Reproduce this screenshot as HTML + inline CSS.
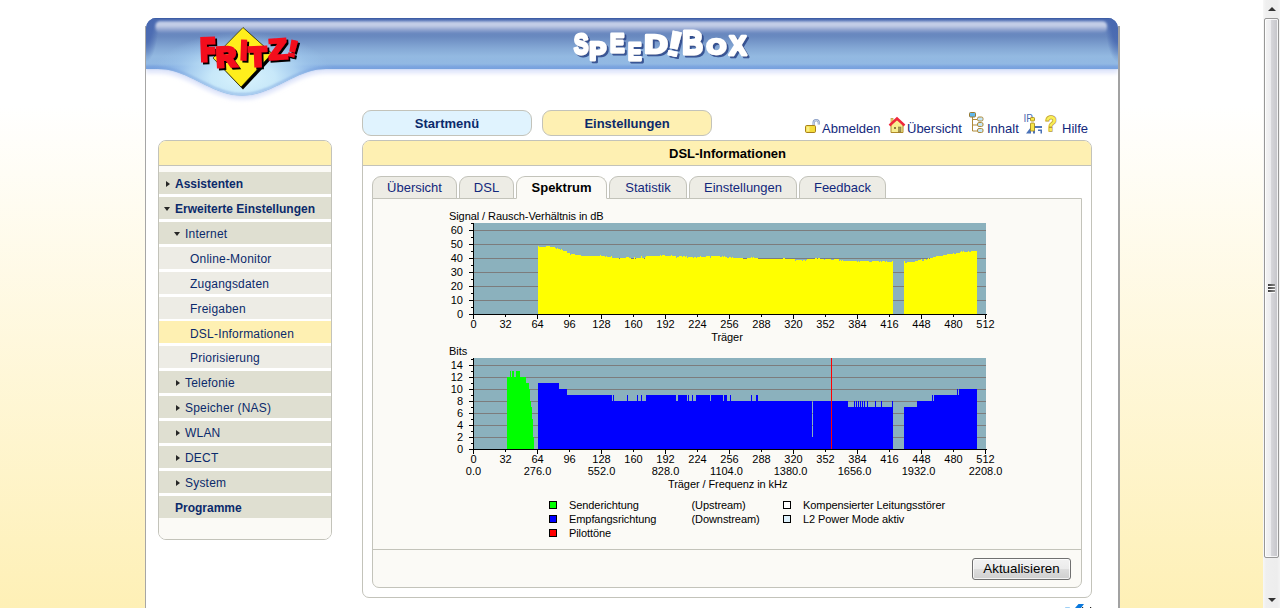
<!DOCTYPE html>
<html lang="de"><head><meta charset="utf-8"><title>FRITZ!Box</title>
<style>
html,body{margin:0;padding:0}
body{width:1280px;height:608px;overflow:hidden;position:relative;font-family:"Liberation Sans", sans-serif;font-size:13px;color:#000;
 background:#fff linear-gradient(to bottom,#ffffff 0,#ffffff 105px,#fef0b6 608px) no-repeat}
*{box-sizing:border-box}
.abs,.hdr,.chart,.ico,.tab,.nb,.tl{position:absolute}
#wrap{position:absolute;left:145px;top:26px;width:975px;height:582px;background:#fff;border-left:1px solid #a6a6a6;border-right:2px solid #a2a2a2}
.hdr{left:145px;top:18px}
.nb{top:110px;width:170px;height:26px;border:1px solid #c3c3ba;border-radius:9px;text-align:center;line-height:25px;font-weight:bold;font-size:13px;color:#0b2a6b}
.tl{top:120px;height:18px;line-height:18px;font-size:13px;color:#12287c;white-space:nowrap}
.menu{position:absolute;left:158px;top:140px;width:174px;height:400px;border:1px solid #c3c3ba;border-radius:8px;background:#fff;overflow:hidden}
.mhead{position:absolute;left:0;top:0;width:100%;height:25px;background:#fef0b2;border-bottom:1px solid #c3c3ba}
.menu:after{content:"";position:absolute;left:0;right:0;top:377px;bottom:0;background:#fbfaf6}
.menu:before{content:"";position:absolute;left:0;right:0;top:25px;height:6px;background:#fbfaf6}
.mi{position:absolute;left:0;width:172px;font-size:12px;color:#0b2a6b;white-space:nowrap}
.mi.l1{background:#dfdfd1;font-weight:bold;padding-left:16px}
.mi.l2{background:#dfdfd1;padding-left:26px;letter-spacing:0.2px}
.mi.l3{background:#edece5;padding-left:31px;letter-spacing:0.2px}
.mi.sel{background:#fef0b2}
.mi.sel span{top:1.5px}
.mi span{position:relative;top:0.5px}
.ar,.ad{position:absolute;width:0;height:0;border-style:solid}
.ar{border-width:3.8px 0 3.8px 4.2px;border-color:transparent transparent transparent #262626;top:9.2px}
.ad{border-width:4.2px 3.8px 0 3.8px;border-color:#262626 transparent transparent transparent;top:9.6px}
.l1 .ar{left:7.3px}.l1 .ad{left:5px}
.l2 .ar{left:16.8px}.l2 .ad{left:15px}
#box{position:absolute;left:362px;top:140px;width:730px;height:458px;border:1px solid #c3c3ba;border-radius:8px 8px 7px 7px;background:#fff;overflow:hidden}
#box .bh{position:absolute;left:0;top:0;width:100%;height:25px;background:#fef0b2;border-bottom:1px solid #c3c3ba;text-align:center;line-height:26px;font-weight:bold;font-size:13px;color:#000;padding-left:1px}
#panel{position:absolute;left:372px;top:198px;width:710px;height:390px;border:1px solid #c3c3ba;border-radius:0 0 7px 7px;background:#fbfaf6}
#hr{position:absolute;left:373px;top:549px;width:708px;height:1px;background:#c3c3ba}
.tab{top:176px;height:23px;border:1px solid #c3c3ba;border-bottom:1px solid #c3c3ba;border-radius:9px 9px 0 0;background:#edece5;text-align:center;line-height:21px;font-size:13px;color:#12287c;margin-right:0}
.tab.act{background:#fbfaf6;border-bottom-color:#fbfaf6;font-weight:bold;color:#000}
#btn{position:absolute;left:972px;top:558px;width:99px;height:22px;border:1px solid #707070;border-radius:3px;background:linear-gradient(to bottom,#f2f2f2 0,#ebebeb 50%,#dddddd 51%,#cfcfcf 100%);box-shadow:inset 0 0 0 1px rgba(255,255,255,.75);text-align:center;line-height:20px;font-size:13.333px;color:#000}
#sb{position:absolute;left:1263px;top:0;width:17px;height:608px;background:linear-gradient(to right,#f7f7f7 0,#efefef 3px,#ededed 14px,#f3f3f3 17px)}
#sbt{position:absolute;left:1px;top:18px;width:15px;height:540px;border:1px solid #979797;border-radius:2px;background:linear-gradient(to right,#f4f4f4 0,#ebebee 45%,#d6d6da 50%,#c4c4c9 100%);box-shadow:inset 0 0 0 1px rgba(255,255,255,.8)}
.grip{position:absolute;left:3px;width:7px;height:1.5px;background:linear-gradient(to right,#3c3c3c,#8a8a8a);box-shadow:0 1px 0 rgba(255,255,255,.9)}
.ls{letter-spacing:-0.08px}
.arw{position:absolute;left:5px;width:0;height:0;border-style:solid}
</style></head><body>
<div id="wrap"></div>
<svg class="hdr" width="975" height="90" viewBox="145 18 975 90">
<defs>
<linearGradient id="band" x1="0" y1="18" x2="0" y2="69" gradientUnits="userSpaceOnUse">
<stop offset="0" stop-color="#3f5fa6"/><stop offset="0.04" stop-color="#4b6bb1"/>
<stop offset="0.10" stop-color="#5675b7"/><stop offset="0.25" stop-color="#6483bd"/>
<stop offset="0.37" stop-color="#6a8ac0"/><stop offset="0.60" stop-color="#85a9d6"/>
<stop offset="0.75" stop-color="#93b9e1"/><stop offset="0.90" stop-color="#91b8e3"/>
<stop offset="0.95" stop-color="#80a9e0"/><stop offset="1" stop-color="#78a2de"/></linearGradient>
<linearGradient id="hl" x1="0" y1="20.5" x2="0" y2="33.5" gradientUnits="userSpaceOnUse">
<stop offset="0" stop-color="#c8d2ea" stop-opacity="0.55"/><stop offset="0.22" stop-color="#c8d2ea" stop-opacity="1"/>
<stop offset="0.45" stop-color="#c3cde6" stop-opacity="0.95"/><stop offset="0.75" stop-color="#b4c0df" stop-opacity="0.5"/><stop offset="1" stop-color="#b0bcdc" stop-opacity="0"/></linearGradient>
<radialGradient id="glow" cx="243" cy="78" r="92" gradientUnits="userSpaceOnUse" gradientTransform="translate(0 78) scale(1 0.5) translate(0 -78)">
<stop offset="0" stop-color="#d8f3fd" stop-opacity="1"/><stop offset="0.35" stop-color="#caeafa" stop-opacity="0.97"/><stop offset="0.6" stop-color="#b4d9f4" stop-opacity="0.8"/><stop offset="0.82" stop-color="#a0c8ee" stop-opacity="0.4"/><stop offset="1" stop-color="#9cc4ea" stop-opacity="0"/></radialGradient>
<radialGradient id="cornL" cx="146" cy="18" r="1" gradientUnits="userSpaceOnUse" gradientTransform="translate(146 18) scale(13 44) translate(-146 -18)">
<stop offset="0" stop-color="#4868b0" stop-opacity="1"/><stop offset="0.55" stop-color="#4868b0" stop-opacity="0.85"/><stop offset="1" stop-color="#4868b0" stop-opacity="0"/></radialGradient>
<radialGradient id="cornR" cx="1118" cy="18" r="1" gradientUnits="userSpaceOnUse" gradientTransform="translate(1118 18) scale(13 44) translate(-1118 -18)">
<stop offset="0" stop-color="#4868b0" stop-opacity="1"/><stop offset="0.55" stop-color="#4868b0" stop-opacity="0.85"/><stop offset="1" stop-color="#4868b0" stop-opacity="0"/></radialGradient>
<clipPath id="hclip"><path d="M146,108 V28 a10,10 0 0 1 10,-10 H1108 a10,10 0 0 1 10,10 V108 Z"/></clipPath>
<filter id="shF" x="-10%" y="-10%" width="125%" height="130%"><feOffset in="SourceAlpha" dx="2.2" dy="2.2" result="o"/><feFlood flood-color="#000"/><feComposite in2="o" operator="in" result="s"/><feMerge><feMergeNode in="s"/><feMergeNode in="SourceGraphic"/></feMerge></filter>
<filter id="shS" x="-5%" y="-10%" width="112%" height="125%"><feOffset in="SourceAlpha" dx="1.5" dy="1.5" result="o"/><feFlood flood-color="#2a4488" flood-opacity="0.85"/><feComposite in2="o" operator="in" result="s"/><feMerge><feMergeNode in="s"/><feMergeNode in="SourceGraphic"/></feMerge></filter>
<filter id="blur1" x="-5%" y="-50%" width="110%" height="200%"><feGaussianBlur stdDeviation="1.2"/></filter>
<filter id="blur2" x="-10%" y="-30%" width="120%" height="160%"><feGaussianBlur stdDeviation="2.2"/></filter>
<filter id="blurh" x="-2%" y="-40%" width="104%" height="180%"><feGaussianBlur stdDeviation="0.9"/></filter>
</defs>
<g clip-path="url(#hclip)">
<path d="M146,69 L158,69.0 L162,69.15 L166,69.59 L170,70.31 L174,71.3 L178,72.54 L182,73.99 L186,75.62 L190,77.41 L194,79.3 L198,81.26 L202,83.24 L206,85.2 L210,87.09 L214,88.88 L218,90.51 L222,91.96 L226,93.2 L230,94.19 L234,94.91 L238,95.35 L242,95.5 L246,95.35 L250,94.91 L254,94.19 L258,93.2 L262,91.96 L266,90.51 L270,88.88 L274,87.09 L278,85.2 L282,83.24 L286,81.26 L290,79.3 L294,77.41 L298,75.62 L302,73.99 L306,72.54 L310,71.3 L314,70.31 L318,69.59 L322,69.15 L326,69.0 L326,69 H1118" fill="none" stroke="#dbe2fa" stroke-width="5" filter="url(#blur2)" transform="translate(0 1.5)"/>
<path d="M146,18 H1118 V69 H326 L326,69.0 L322,69.15 L318,69.59 L314,70.31 L310,71.3 L306,72.54 L302,73.99 L298,75.62 L294,77.41 L290,79.3 L286,81.26 L282,83.24 L278,85.2 L274,87.09 L270,88.88 L266,90.51 L262,91.96 L258,93.2 L254,94.19 L250,94.91 L246,95.35 L242,95.5 L238,95.35 L234,94.91 L230,94.19 L226,93.2 L222,91.96 L218,90.51 L214,88.88 L210,87.09 L206,85.2 L202,83.24 L198,81.26 L194,79.3 L190,77.41 L186,75.62 L182,73.99 L178,72.54 L174,71.3 L170,70.31 L166,69.59 L162,69.15 L158,69.0 L146,69 Z" fill="url(#band)"/>
<path d="M146,18 H1118 V69 H326 L326,69.0 L322,69.15 L318,69.59 L314,70.31 L310,71.3 L306,72.54 L302,73.99 L298,75.62 L294,77.41 L290,79.3 L286,81.26 L282,83.24 L278,85.2 L274,87.09 L270,88.88 L266,90.51 L262,91.96 L258,93.2 L254,94.19 L250,94.91 L246,95.35 L242,95.5 L238,95.35 L234,94.91 L230,94.19 L226,93.2 L222,91.96 L218,90.51 L214,88.88 L210,87.09 L206,85.2 L202,83.24 L198,81.26 L194,79.3 L190,77.41 L186,75.62 L182,73.99 L178,72.54 L174,71.3 L170,70.31 L166,69.59 L162,69.15 L158,69.0 L146,69 Z" fill="url(#glow)"/>
<path d="M146,69 L158,69.0 L162,69.15 L166,69.59 L170,70.31 L174,71.3 L178,72.54 L182,73.99 L186,75.62 L190,77.41 L194,79.3 L198,81.26 L202,83.24 L206,85.2 L210,87.09 L214,88.88 L218,90.51 L222,91.96 L226,93.2 L230,94.19 L234,94.91 L238,95.35 L242,95.5 L246,95.35 L250,94.91 L254,94.19 L258,93.2 L262,91.96 L266,90.51 L270,88.88 L274,87.09 L278,85.2 L282,83.24 L286,81.26 L290,79.3 L294,77.41 L298,75.62 L302,73.99 L306,72.54 L310,71.3 L314,70.31 L318,69.59 L322,69.15 L326,69.0 L326,69 H1118" fill="none" stroke="#759ddd" stroke-width="2" opacity="0.6" filter="url(#blur1)" transform="translate(0 -1.2)"/>
<rect x="146" y="18" width="14" height="46" fill="url(#cornL)"/>
<rect x="1104" y="18" width="14" height="46" fill="url(#cornR)"/>
<rect x="155.5" y="21" width="951.500" height="12" rx="5" fill="url(#hl)" filter="url(#blurh)"/>
<rect x="146" y="18" width="972" height="1" fill="#3d5da4" opacity="0.9"/>
</g>
<g>
<polygon points="245,29.5 274.5,55.5 243,89.5 215,60" fill="#000"/>
<polygon points="243,27.5 272,53.5 241,87 213,58" fill="#ffee1c" stroke="#1a1a00" stroke-width="0.7"/>
<g filter="url(#shF)" aria-label="FRITZ!">
<text transform="translate(208.00 49.60) rotate(-2) scale(0.2314 0.3101) translate(-32.00 34.50)" font-family='"Liberation Sans", sans-serif' font-weight="bold" font-size="100px" fill="#f40a1e" stroke="#f40a1e" stroke-width="13.44" stroke-linejoin="miter" opacity="1">F</text>
<text transform="translate(226.75 56.85) rotate(-3) scale(0.2756 0.2739) translate(-38.25 34.50)" font-family='"Liberation Sans", sans-serif' font-weight="bold" font-size="100px" fill="#f40a1e" stroke="#f40a1e" stroke-width="12.37" stroke-linejoin="miter" opacity="1">R</text>
<text transform="translate(243.70 50.25) rotate(2) scale(0.2483 0.2681) translate(-13.75 34.50)" font-family='"Liberation Sans", sans-serif' font-weight="bold" font-size="100px" fill="#f40a1e" stroke="#f40a1e" stroke-width="10.08" stroke-linejoin="miter" opacity="1">I</text>
<text transform="translate(257.75 56.55) rotate(-2) scale(0.2729 0.2623) translate(-30.50 34.50)" font-family='"Liberation Sans", sans-serif' font-weight="bold" font-size="100px" fill="#f40a1e" stroke="#f40a1e" stroke-width="13.46" stroke-linejoin="miter" opacity="1">T</text>
<text transform="translate(277.60 48.95) rotate(-4) scale(0.3091 0.2855) translate(-30.50 34.50)" font-family='"Liberation Sans", sans-serif' font-weight="bold" font-size="100px" fill="#f40a1e" stroke="#f40a1e" stroke-width="8.75" stroke-linejoin="miter" opacity="1">Z</text>
<text transform="translate(292.90 48.60) rotate(13) scale(0.3724 0.2348) translate(-16.75 34.50)" font-family='"Liberation Sans", sans-serif' font-weight="bold" font-size="100px" fill="#f40a1e" stroke="#f40a1e" stroke-width="4.06" stroke-linejoin="miter" opacity="1">!</text>
</g>
</g>
<g filter="url(#shS)" aria-label="Speed!Box">
<text transform="translate(581.15 43.45) rotate(0) scale(0.2217 0.2972) translate(-33.00 34.50)" font-family='"Liberation Sans", sans-serif' font-weight="bold" font-size="100px" fill="#ffffff" stroke="#ffffff" stroke-width="9.35" stroke-linejoin="round" opacity="1">S</text>
<text transform="translate(598.30 51.20) rotate(0) scale(0.2561 0.2580) translate(-35.00 34.50)" font-family='"Liberation Sans", sans-serif' font-weight="bold" font-size="100px" fill="#ffffff" stroke="#ffffff" stroke-width="10.11" stroke-linejoin="round" opacity="1">P</text>
<text transform="translate(617.40 43.45) rotate(0) scale(0.2159 0.2565) translate(-34.75 34.50)" font-family='"Liberation Sans", sans-serif' font-weight="bold" font-size="100px" fill="#ffffff" stroke="#ffffff" stroke-width="11.05" stroke-linejoin="round" opacity="1">E</text>
<text transform="translate(635.00 51.45) rotate(0) scale(0.2018 0.2391) translate(-34.75 34.50)" font-family='"Liberation Sans", sans-serif' font-weight="bold" font-size="100px" fill="#ffffff" stroke="#ffffff" stroke-width="11.84" stroke-linejoin="round" opacity="1">E</text>
<text transform="translate(656.40 43.85) rotate(0) scale(0.3252 0.2652) translate(-37.25 34.50)" font-family='"Liberation Sans", sans-serif' font-weight="bold" font-size="100px" fill="#ffffff" stroke="#ffffff" stroke-width="9.53" stroke-linejoin="round" opacity="1">D</text>
<text transform="translate(674.80 43.85) rotate(12) scale(0.5931 0.3580) translate(-16.75 34.50)" font-family='"Liberation Sans", sans-serif' font-weight="bold" font-size="100px" fill="#ffffff" stroke="#ffffff" stroke-width="2.17" stroke-linejoin="round" opacity="1">!</text>
<text transform="translate(692.85 42.30) rotate(0) scale(0.2869 0.3333) translate(-37.00 34.50)" font-family='"Liberation Sans", sans-serif' font-weight="bold" font-size="100px" fill="#ffffff" stroke="#ffffff" stroke-width="9.05" stroke-linejoin="round" opacity="1">B</text>
<text transform="translate(716.20 46.20) rotate(0) scale(0.2532 0.2141) translate(-38.75 34.50)" font-family='"Liberation Sans", sans-serif' font-weight="bold" font-size="100px" fill="#ffffff" stroke="#ffffff" stroke-width="12.03" stroke-linejoin="round" opacity="1">O</text>
<text transform="translate(737.75 45.75) rotate(0) scale(0.2620 0.2797) translate(-33.25 34.50)" font-family='"Liberation Sans", sans-serif' font-weight="bold" font-size="100px" fill="#ffffff" stroke="#ffffff" stroke-width="9.60" stroke-linejoin="round" opacity="1">X</text>
</g>
</svg>
<div class="nb" style="left:362px;background:#e0f3fe">Startmenü</div>
<div class="nb" style="left:542px;background:#fef0b2">Einstellungen</div>
<svg class="ico" style="left:804px;top:117px" width="18" height="18" viewBox="804 117 18 18">
<path d="M813.6,126 V122.8 a2.600,2.600 0 0 1 5.200,0 V124.600" fill="none" stroke="#8499c2" stroke-width="2.200"/>
<path d="M813.6,126 V122.8 a2.600,2.600 0 0 1 5.200,0 V124.600" fill="none" stroke="#e4ebf7" stroke-width="0.7"/>
<rect x="805.5" y="125.5" width="10" height="7" rx="1.2" fill="#f4dc3c" stroke="#a8801c" stroke-width="1"/>
<rect x="806.5" y="126.5" width="3" height="5" fill="#fdf39a" opacity="0.8"/>
</svg>
<svg class="ico" style="left:887px;top:115px" width="20" height="20" viewBox="887 115 20 20">
<rect x="891" y="118.5" width="2" height="5" fill="#f2de70" stroke="#b08a28" stroke-width="0.6"/>
<path d="M891,124.5 L897,119.5 L903,124.5 V132.5 H891 Z" fill="#f8ee90" stroke="#b08a28" stroke-width="1"/>
<path d="M889.5,125.5 L897,118.5 L904.5,125.5" fill="none" stroke="#f0283c" stroke-width="2.4" stroke-linejoin="miter"/>
<rect x="894" y="127" width="2" height="2" fill="#8a7a40"/>
<rect x="898.5" y="127" width="2.5" height="5" fill="#a89858" stroke="#7a6a30" stroke-width="0.5"/>
</svg>
<svg class="ico" style="left:967px;top:111px" width="20" height="24" viewBox="967 111 20 24">
<path d="M972.5,117 V131 H977 M972.5,119.5 H977 M972.5,125 H977" fill="none" stroke="#b08a38" stroke-width="1"/>
<rect x="969.5" y="112.500" width="6" height="4.500" rx="1" fill="#62b8ec" stroke="#9a7a30" stroke-width="1"/>
<rect x="977.5" y="117" width="5.500" height="4" rx="1.500" fill="#c4e6f8" stroke="#b08a38" stroke-width="1"/>
<rect x="977.5" y="122.500" width="5.500" height="4" rx="1.500" fill="#c4e6f8" stroke="#b08a38" stroke-width="1"/>
<rect x="977.5" y="128.500" width="5.500" height="4" rx="1.500" fill="#c4e6f8" stroke="#b08a38" stroke-width="1"/>
</svg>
<svg class="ico" style="left:1022px;top:112px" width="22" height="24" viewBox="1022 112 22 24">
<text x="1023.5" y="122" font-family='"Liberation Sans", sans-serif' font-size="10px" fill="#4a6cb0">IP</text>
<path d="M1026,133.500 L1031,127 V133.500 Z M1033,133.500 V126 H1042 V128 H1035 V133.500 Z M1038,129.500 H1042 V133.500 H1040.500 V131 H1038 Z" fill="#4a72b8"/>
<rect x="1030.500" y="117.500" width="4" height="3.500" rx="0.8" fill="#f6e648" stroke="#a88a20" stroke-width="0.9"/>
<rect x="1030.500" y="123" width="4" height="8" rx="0.8" fill="#f6e648" stroke="#a88a20" stroke-width="0.9"/>
</svg>
<svg class="ico" style="left:1043px;top:112px" width="18" height="24" viewBox="1043 112 18 24">
<text x="1045.2" y="131.300" font-family='"Liberation Sans", sans-serif' font-weight="bold" font-size="22.500px" fill="#f9ee58" stroke="#b89830" stroke-width="1.6" paint-order="stroke fill" textLength="11.500" lengthAdjust="spacingAndGlyphs">?</text>
</svg>
<div class="tl" style="left:822px">Abmelden</div>
<div class="tl" style="left:907px">Übersicht</div>
<div class="tl" style="left:987px">Inhalt</div>
<div class="tl" style="left:1062px">Hilfe</div>
<div class="menu"><div class="mhead"></div>
<div class="mi l1" style="top:31px;height:22px;line-height:22px"><i class="ar"></i><span>Assistenten</span></div>
<div class="mi l1" style="top:56px;height:22px;line-height:22px"><i class="ad"></i><span>Erweiterte Einstellungen</span></div>
<div class="mi l2" style="top:81px;height:22px;line-height:22px"><i class="ad"></i><span>Internet</span></div>
<div class="mi l3" style="top:106px;height:22px;line-height:22px"><span>Online-Monitor</span></div>
<div class="mi l3" style="top:131px;height:22px;line-height:22px"><span>Zugangsdaten</span></div>
<div class="mi l3" style="top:156px;height:22px;line-height:22px"><span>Freigaben</span></div>
<div class="mi l3 sel" style="top:180px;height:22px;line-height:22px"><span>DSL-Informationen</span></div>
<div class="mi l3" style="top:205px;height:22px;line-height:22px"><span>Priorisierung</span></div>
<div class="mi l2" style="top:230px;height:22px;line-height:22px"><i class="ar"></i><span>Telefonie</span></div>
<div class="mi l2" style="top:255px;height:22px;line-height:22px"><i class="ar"></i><span>Speicher (NAS)</span></div>
<div class="mi l2" style="top:280px;height:22px;line-height:22px"><i class="ar"></i><span>WLAN</span></div>
<div class="mi l2" style="top:305px;height:22px;line-height:22px"><i class="ar"></i><span>DECT</span></div>
<div class="mi l2" style="top:330px;height:22px;line-height:22px"><i class="ar"></i><span>System</span></div>
<div class="mi l1" style="top:355px;height:22px;line-height:22px"><span>Programme</span></div>
</div>
<div id="box"><div class="bh">DSL-Informationen</div></div>
<div id="panel"></div>
<div class="tab" style="left:372px;width:85px">Übersicht</div>
<div class="tab" style="left:459px;width:55px">DSL</div>
<div class="tab act" style="left:516px;width:91px">Spektrum</div>
<div class="tab" style="left:609px;width:78px">Statistik</div>
<div class="tab" style="left:689px;width:108px">Einstellungen</div>
<div class="tab" style="left:799px;width:87px">Feedback</div>
<div id="hr"></div>
<svg class="chart" width="580" height="340" viewBox="440 205 580 340" style="left:440px;top:205px" font-family='"Liberation Sans", sans-serif' font-size="11px" fill="#000">
<g shape-rendering="crispEdges">
<rect x="474" y="223" width="512" height="91" fill="#8bb1bd"/>
<rect x="474" y="300" width="512" height="1" fill="#7c7c7c"/>
<rect x="474" y="286" width="512" height="1" fill="#7c7c7c"/>
<rect x="474" y="272" width="512" height="1" fill="#7c7c7c"/>
<rect x="474" y="258" width="512" height="1" fill="#7c7c7c"/>
<rect x="474" y="244" width="512" height="1" fill="#7c7c7c"/>
<rect x="474" y="230" width="512" height="1" fill="#7c7c7c"/>
<rect x="538" y="246" width="1" height="68" fill="#ffff00"/>
<rect x="539" y="247" width="7" height="67" fill="#ffff00"/>
<rect x="546" y="246" width="4" height="68" fill="#ffff00"/>
<rect x="550" y="247" width="5" height="67" fill="#ffff00"/>
<rect x="555" y="248" width="1" height="66" fill="#ffff00"/>
<rect x="556" y="249" width="1" height="65" fill="#ffff00"/>
<rect x="557" y="248" width="1" height="66" fill="#ffff00"/>
<rect x="558" y="249" width="2" height="65" fill="#ffff00"/>
<rect x="560" y="250" width="1" height="64" fill="#ffff00"/>
<rect x="561" y="249" width="1" height="65" fill="#ffff00"/>
<rect x="562" y="250" width="1" height="64" fill="#ffff00"/>
<rect x="563" y="251" width="4" height="63" fill="#ffff00"/>
<rect x="567" y="253" width="3" height="61" fill="#ffff00"/>
<rect x="570" y="255" width="1" height="59" fill="#ffff00"/>
<rect x="571" y="254" width="4" height="60" fill="#ffff00"/>
<rect x="575" y="255" width="6" height="59" fill="#ffff00"/>
<rect x="581" y="256" width="19" height="58" fill="#ffff00"/>
<rect x="600" y="255" width="1" height="59" fill="#ffff00"/>
<rect x="601" y="256" width="4" height="58" fill="#ffff00"/>
<rect x="605" y="257" width="1" height="57" fill="#ffff00"/>
<rect x="606" y="256" width="1" height="58" fill="#ffff00"/>
<rect x="607" y="257" width="4" height="57" fill="#ffff00"/>
<rect x="611" y="256" width="1" height="58" fill="#ffff00"/>
<rect x="612" y="258" width="7" height="56" fill="#ffff00"/>
<rect x="619" y="259" width="1" height="55" fill="#ffff00"/>
<rect x="620" y="258" width="6" height="56" fill="#ffff00"/>
<rect x="626" y="257" width="3" height="57" fill="#ffff00"/>
<rect x="629" y="258" width="2" height="56" fill="#ffff00"/>
<rect x="631" y="259" width="3" height="55" fill="#ffff00"/>
<rect x="634" y="257" width="1" height="57" fill="#ffff00"/>
<rect x="635" y="259" width="1" height="55" fill="#ffff00"/>
<rect x="636" y="258" width="5" height="56" fill="#ffff00"/>
<rect x="641" y="256" width="1" height="58" fill="#ffff00"/>
<rect x="642" y="258" width="2" height="56" fill="#ffff00"/>
<rect x="644" y="259" width="1" height="55" fill="#ffff00"/>
<rect x="645" y="257" width="1" height="57" fill="#ffff00"/>
<rect x="646" y="256" width="14" height="58" fill="#ffff00"/>
<rect x="660" y="255" width="1" height="59" fill="#ffff00"/>
<rect x="661" y="256" width="1" height="58" fill="#ffff00"/>
<rect x="662" y="255" width="3" height="59" fill="#ffff00"/>
<rect x="665" y="256" width="6" height="58" fill="#ffff00"/>
<rect x="671" y="255" width="1" height="59" fill="#ffff00"/>
<rect x="672" y="256" width="4" height="58" fill="#ffff00"/>
<rect x="676" y="258" width="1" height="56" fill="#ffff00"/>
<rect x="677" y="257" width="2" height="57" fill="#ffff00"/>
<rect x="679" y="256" width="3" height="58" fill="#ffff00"/>
<rect x="682" y="257" width="1" height="57" fill="#ffff00"/>
<rect x="683" y="256" width="2" height="58" fill="#ffff00"/>
<rect x="685" y="257" width="1" height="57" fill="#ffff00"/>
<rect x="686" y="256" width="1" height="58" fill="#ffff00"/>
<rect x="687" y="258" width="1" height="56" fill="#ffff00"/>
<rect x="688" y="257" width="5" height="57" fill="#ffff00"/>
<rect x="693" y="258" width="1" height="56" fill="#ffff00"/>
<rect x="694" y="257" width="2" height="57" fill="#ffff00"/>
<rect x="696" y="258" width="1" height="56" fill="#ffff00"/>
<rect x="697" y="257" width="3" height="57" fill="#ffff00"/>
<rect x="700" y="256" width="1" height="58" fill="#ffff00"/>
<rect x="701" y="257" width="5" height="57" fill="#ffff00"/>
<rect x="706" y="256" width="4" height="58" fill="#ffff00"/>
<rect x="710" y="258" width="1" height="56" fill="#ffff00"/>
<rect x="711" y="256" width="9" height="58" fill="#ffff00"/>
<rect x="720" y="257" width="2" height="57" fill="#ffff00"/>
<rect x="722" y="256" width="1" height="58" fill="#ffff00"/>
<rect x="723" y="257" width="1" height="57" fill="#ffff00"/>
<rect x="724" y="256" width="1" height="58" fill="#ffff00"/>
<rect x="725" y="257" width="2" height="57" fill="#ffff00"/>
<rect x="727" y="258" width="2" height="56" fill="#ffff00"/>
<rect x="729" y="257" width="2" height="57" fill="#ffff00"/>
<rect x="731" y="258" width="1" height="56" fill="#ffff00"/>
<rect x="732" y="257" width="1" height="57" fill="#ffff00"/>
<rect x="733" y="258" width="10" height="56" fill="#ffff00"/>
<rect x="743" y="259" width="4" height="55" fill="#ffff00"/>
<rect x="747" y="258" width="4" height="56" fill="#ffff00"/>
<rect x="751" y="257" width="1" height="57" fill="#ffff00"/>
<rect x="752" y="258" width="1" height="56" fill="#ffff00"/>
<rect x="753" y="257" width="1" height="57" fill="#ffff00"/>
<rect x="754" y="258" width="4" height="56" fill="#ffff00"/>
<rect x="758" y="259" width="25" height="55" fill="#ffff00"/>
<rect x="783" y="258" width="2" height="56" fill="#ffff00"/>
<rect x="785" y="259" width="10" height="55" fill="#ffff00"/>
<rect x="795" y="261" width="1" height="53" fill="#ffff00"/>
<rect x="796" y="260" width="6" height="54" fill="#ffff00"/>
<rect x="802" y="261" width="1" height="53" fill="#ffff00"/>
<rect x="803" y="260" width="2" height="54" fill="#ffff00"/>
<rect x="805" y="261" width="1" height="53" fill="#ffff00"/>
<rect x="806" y="260" width="1" height="54" fill="#ffff00"/>
<rect x="807" y="259" width="8" height="55" fill="#ffff00"/>
<rect x="815" y="258" width="2" height="56" fill="#ffff00"/>
<rect x="817" y="259" width="1" height="55" fill="#ffff00"/>
<rect x="818" y="258" width="2" height="56" fill="#ffff00"/>
<rect x="820" y="259" width="4" height="55" fill="#ffff00"/>
<rect x="824" y="260" width="1" height="54" fill="#ffff00"/>
<rect x="825" y="259" width="6" height="55" fill="#ffff00"/>
<rect x="831" y="260" width="3" height="54" fill="#ffff00"/>
<rect x="834" y="259" width="5" height="55" fill="#ffff00"/>
<rect x="839" y="261" width="1" height="53" fill="#ffff00"/>
<rect x="840" y="260" width="1" height="54" fill="#ffff00"/>
<rect x="841" y="261" width="1" height="53" fill="#ffff00"/>
<rect x="842" y="260" width="1" height="54" fill="#ffff00"/>
<rect x="843" y="261" width="14" height="53" fill="#ffff00"/>
<rect x="857" y="262" width="1" height="52" fill="#ffff00"/>
<rect x="858" y="261" width="1" height="53" fill="#ffff00"/>
<rect x="859" y="262" width="1" height="52" fill="#ffff00"/>
<rect x="860" y="261" width="9" height="53" fill="#ffff00"/>
<rect x="869" y="262" width="3" height="52" fill="#ffff00"/>
<rect x="872" y="261" width="7" height="53" fill="#ffff00"/>
<rect x="879" y="262" width="1" height="52" fill="#ffff00"/>
<rect x="880" y="261" width="1" height="53" fill="#ffff00"/>
<rect x="881" y="262" width="1" height="52" fill="#ffff00"/>
<rect x="882" y="261" width="3" height="53" fill="#ffff00"/>
<rect x="885" y="262" width="1" height="52" fill="#ffff00"/>
<rect x="886" y="261" width="1" height="53" fill="#ffff00"/>
<rect x="887" y="262" width="5" height="52" fill="#ffff00"/>
<rect x="892" y="261" width="1" height="53" fill="#ffff00"/>
<rect x="904" y="261" width="1" height="53" fill="#ffff00"/>
<rect x="905" y="263" width="2" height="51" fill="#ffff00"/>
<rect x="907" y="262" width="8" height="52" fill="#ffff00"/>
<rect x="915" y="261" width="3" height="53" fill="#ffff00"/>
<rect x="918" y="260" width="3" height="54" fill="#ffff00"/>
<rect x="921" y="259" width="1" height="55" fill="#ffff00"/>
<rect x="922" y="261" width="2" height="53" fill="#ffff00"/>
<rect x="924" y="259" width="2" height="55" fill="#ffff00"/>
<rect x="926" y="260" width="1" height="54" fill="#ffff00"/>
<rect x="927" y="259" width="1" height="55" fill="#ffff00"/>
<rect x="928" y="258" width="1" height="56" fill="#ffff00"/>
<rect x="929" y="259" width="1" height="55" fill="#ffff00"/>
<rect x="930" y="258" width="3" height="56" fill="#ffff00"/>
<rect x="933" y="257" width="3" height="57" fill="#ffff00"/>
<rect x="936" y="256" width="7" height="58" fill="#ffff00"/>
<rect x="943" y="255" width="4" height="59" fill="#ffff00"/>
<rect x="947" y="254" width="6" height="60" fill="#ffff00"/>
<rect x="953" y="253" width="1" height="61" fill="#ffff00"/>
<rect x="954" y="254" width="2" height="60" fill="#ffff00"/>
<rect x="956" y="253" width="4" height="61" fill="#ffff00"/>
<rect x="960" y="252" width="1" height="62" fill="#ffff00"/>
<rect x="961" y="251" width="1" height="63" fill="#ffff00"/>
<rect x="962" y="252" width="1" height="62" fill="#ffff00"/>
<rect x="963" y="251" width="1" height="63" fill="#ffff00"/>
<rect x="964" y="252" width="4" height="62" fill="#ffff00"/>
<rect x="968" y="251" width="1" height="63" fill="#ffff00"/>
<rect x="969" y="252" width="2" height="62" fill="#ffff00"/>
<rect x="971" y="251" width="6" height="63" fill="#ffff00"/>
<rect x="473" y="223" width="1" height="92" fill="#000"/>
<rect x="473" y="314" width="514" height="1" fill="#000"/>
<rect x="469" y="314" width="4" height="1" fill="#000"/>
<rect x="471" y="307" width="2" height="1" fill="#000"/>
<rect x="469" y="300" width="4" height="1" fill="#000"/>
<rect x="471" y="293" width="2" height="1" fill="#000"/>
<rect x="469" y="286" width="4" height="1" fill="#000"/>
<rect x="471" y="279" width="2" height="1" fill="#000"/>
<rect x="469" y="272" width="4" height="1" fill="#000"/>
<rect x="471" y="265" width="2" height="1" fill="#000"/>
<rect x="469" y="258" width="4" height="1" fill="#000"/>
<rect x="471" y="251" width="2" height="1" fill="#000"/>
<rect x="469" y="244" width="4" height="1" fill="#000"/>
<rect x="471" y="237" width="2" height="1" fill="#000"/>
<rect x="469" y="230" width="4" height="1" fill="#000"/>
<rect x="471" y="223" width="2" height="1" fill="#000"/>
<rect x="473" y="315" width="1" height="4" fill="#000"/>
<rect x="505" y="315" width="1" height="2" fill="#000"/>
<rect x="537" y="315" width="1" height="4" fill="#000"/>
<rect x="569" y="315" width="1" height="2" fill="#000"/>
<rect x="601" y="315" width="1" height="4" fill="#000"/>
<rect x="633" y="315" width="1" height="2" fill="#000"/>
<rect x="665" y="315" width="1" height="4" fill="#000"/>
<rect x="697" y="315" width="1" height="2" fill="#000"/>
<rect x="729" y="315" width="1" height="4" fill="#000"/>
<rect x="761" y="315" width="1" height="2" fill="#000"/>
<rect x="793" y="315" width="1" height="4" fill="#000"/>
<rect x="825" y="315" width="1" height="2" fill="#000"/>
<rect x="857" y="315" width="1" height="4" fill="#000"/>
<rect x="889" y="315" width="1" height="2" fill="#000"/>
<rect x="921" y="315" width="1" height="4" fill="#000"/>
<rect x="953" y="315" width="1" height="2" fill="#000"/>
<rect x="985" y="315" width="1" height="4" fill="#000"/>
<rect x="474" y="358" width="512" height="91" fill="#8bb1bd"/>
<rect x="474" y="437" width="512" height="1" fill="#7c7c7c"/>
<rect x="474" y="425" width="512" height="1" fill="#7c7c7c"/>
<rect x="474" y="413" width="512" height="1" fill="#7c7c7c"/>
<rect x="474" y="401" width="512" height="1" fill="#7c7c7c"/>
<rect x="474" y="389" width="512" height="1" fill="#7c7c7c"/>
<rect x="474" y="377" width="512" height="1" fill="#7c7c7c"/>
<rect x="474" y="365" width="512" height="1" fill="#7c7c7c"/>
<rect x="507" y="377" width="3" height="72" fill="#00ff00"/>
<rect x="510" y="371" width="1" height="78" fill="#00ff00"/>
<rect x="511" y="377" width="1" height="72" fill="#00ff00"/>
<rect x="512" y="371" width="2" height="78" fill="#00ff00"/>
<rect x="514" y="377" width="2" height="72" fill="#00ff00"/>
<rect x="516" y="371" width="4" height="78" fill="#00ff00"/>
<rect x="520" y="377" width="6" height="72" fill="#00ff00"/>
<rect x="526" y="383" width="3" height="66" fill="#00ff00"/>
<rect x="529" y="389" width="1" height="60" fill="#00ff00"/>
<rect x="530" y="401" width="1" height="48" fill="#00ff00"/>
<rect x="531" y="407" width="1" height="42" fill="#00ff00"/>
<rect x="532" y="419" width="1" height="30" fill="#00ff00"/>
<rect x="533" y="437" width="1" height="12" fill="#00ff00"/>
<rect x="538" y="383" width="21" height="66" fill="#0000ff"/>
<rect x="559" y="389" width="8" height="60" fill="#0000ff"/>
<rect x="567" y="395" width="45" height="54" fill="#0000ff"/>
<rect x="612" y="401" width="1" height="48" fill="#0000ff"/>
<rect x="613" y="395" width="1" height="54" fill="#0000ff"/>
<rect x="614" y="401" width="13" height="48" fill="#0000ff"/>
<rect x="627" y="395" width="1" height="54" fill="#0000ff"/>
<rect x="628" y="401" width="9" height="48" fill="#0000ff"/>
<rect x="637" y="395" width="1" height="54" fill="#0000ff"/>
<rect x="638" y="401" width="3" height="48" fill="#0000ff"/>
<rect x="641" y="395" width="1" height="54" fill="#0000ff"/>
<rect x="642" y="401" width="4" height="48" fill="#0000ff"/>
<rect x="646" y="395" width="30" height="54" fill="#0000ff"/>
<rect x="676" y="401" width="2" height="48" fill="#0000ff"/>
<rect x="678" y="395" width="9" height="54" fill="#0000ff"/>
<rect x="687" y="401" width="1" height="48" fill="#0000ff"/>
<rect x="688" y="395" width="1" height="54" fill="#0000ff"/>
<rect x="689" y="401" width="3" height="48" fill="#0000ff"/>
<rect x="692" y="395" width="1" height="54" fill="#0000ff"/>
<rect x="693" y="401" width="3" height="48" fill="#0000ff"/>
<rect x="696" y="395" width="14" height="54" fill="#0000ff"/>
<rect x="710" y="401" width="1" height="48" fill="#0000ff"/>
<rect x="711" y="395" width="12" height="54" fill="#0000ff"/>
<rect x="723" y="401" width="1" height="48" fill="#0000ff"/>
<rect x="724" y="395" width="3" height="54" fill="#0000ff"/>
<rect x="727" y="401" width="3" height="48" fill="#0000ff"/>
<rect x="730" y="395" width="1" height="54" fill="#0000ff"/>
<rect x="731" y="401" width="20" height="48" fill="#0000ff"/>
<rect x="751" y="395" width="1" height="54" fill="#0000ff"/>
<rect x="752" y="401" width="4" height="48" fill="#0000ff"/>
<rect x="756" y="395" width="2" height="54" fill="#0000ff"/>
<rect x="758" y="401" width="54" height="48" fill="#0000ff"/>
<rect x="812" y="437" width="1" height="12" fill="#0000ff"/>
<rect x="813" y="401" width="35" height="48" fill="#0000ff"/>
<rect x="848" y="407" width="6" height="42" fill="#0000ff"/>
<rect x="854" y="401" width="1" height="48" fill="#0000ff"/>
<rect x="855" y="407" width="1" height="42" fill="#0000ff"/>
<rect x="856" y="401" width="1" height="48" fill="#0000ff"/>
<rect x="857" y="407" width="1" height="42" fill="#0000ff"/>
<rect x="858" y="401" width="1" height="48" fill="#0000ff"/>
<rect x="859" y="407" width="1" height="42" fill="#0000ff"/>
<rect x="860" y="401" width="1" height="48" fill="#0000ff"/>
<rect x="861" y="407" width="1" height="42" fill="#0000ff"/>
<rect x="862" y="401" width="1" height="48" fill="#0000ff"/>
<rect x="863" y="407" width="1" height="42" fill="#0000ff"/>
<rect x="864" y="401" width="1" height="48" fill="#0000ff"/>
<rect x="865" y="407" width="2" height="42" fill="#0000ff"/>
<rect x="867" y="401" width="1" height="48" fill="#0000ff"/>
<rect x="868" y="407" width="7" height="42" fill="#0000ff"/>
<rect x="875" y="401" width="1" height="48" fill="#0000ff"/>
<rect x="876" y="407" width="5" height="42" fill="#0000ff"/>
<rect x="881" y="401" width="1" height="48" fill="#0000ff"/>
<rect x="882" y="407" width="10" height="42" fill="#0000ff"/>
<rect x="892" y="401" width="1" height="48" fill="#0000ff"/>
<rect x="904" y="407" width="13" height="42" fill="#0000ff"/>
<rect x="917" y="401" width="15" height="48" fill="#0000ff"/>
<rect x="932" y="395" width="1" height="54" fill="#0000ff"/>
<rect x="933" y="401" width="1" height="48" fill="#0000ff"/>
<rect x="934" y="395" width="23" height="54" fill="#0000ff"/>
<rect x="957" y="389" width="1" height="60" fill="#0000ff"/>
<rect x="958" y="395" width="1" height="54" fill="#0000ff"/>
<rect x="959" y="389" width="18" height="60" fill="#0000ff"/>
<rect x="831" y="358" width="1" height="91" fill="#ff0000"/>
<rect x="473" y="358" width="1" height="92" fill="#000"/>
<rect x="473" y="449" width="514" height="1" fill="#000"/>
<rect x="469" y="449" width="4" height="1" fill="#000"/>
<rect x="471" y="443" width="2" height="1" fill="#000"/>
<rect x="469" y="437" width="4" height="1" fill="#000"/>
<rect x="471" y="431" width="2" height="1" fill="#000"/>
<rect x="469" y="425" width="4" height="1" fill="#000"/>
<rect x="471" y="419" width="2" height="1" fill="#000"/>
<rect x="469" y="413" width="4" height="1" fill="#000"/>
<rect x="471" y="407" width="2" height="1" fill="#000"/>
<rect x="469" y="401" width="4" height="1" fill="#000"/>
<rect x="471" y="395" width="2" height="1" fill="#000"/>
<rect x="469" y="389" width="4" height="1" fill="#000"/>
<rect x="471" y="383" width="2" height="1" fill="#000"/>
<rect x="469" y="377" width="4" height="1" fill="#000"/>
<rect x="471" y="371" width="2" height="1" fill="#000"/>
<rect x="469" y="365" width="4" height="1" fill="#000"/>
<rect x="471" y="359" width="2" height="1" fill="#000"/>
<rect x="473" y="450" width="1" height="4" fill="#000"/>
<rect x="505" y="450" width="1" height="2" fill="#000"/>
<rect x="537" y="450" width="1" height="4" fill="#000"/>
<rect x="569" y="450" width="1" height="2" fill="#000"/>
<rect x="601" y="450" width="1" height="4" fill="#000"/>
<rect x="633" y="450" width="1" height="2" fill="#000"/>
<rect x="665" y="450" width="1" height="4" fill="#000"/>
<rect x="697" y="450" width="1" height="2" fill="#000"/>
<rect x="729" y="450" width="1" height="4" fill="#000"/>
<rect x="761" y="450" width="1" height="2" fill="#000"/>
<rect x="793" y="450" width="1" height="4" fill="#000"/>
<rect x="825" y="450" width="1" height="2" fill="#000"/>
<rect x="857" y="450" width="1" height="4" fill="#000"/>
<rect x="889" y="450" width="1" height="2" fill="#000"/>
<rect x="921" y="450" width="1" height="4" fill="#000"/>
<rect x="953" y="450" width="1" height="2" fill="#000"/>
<rect x="985" y="450" width="1" height="4" fill="#000"/>
</g>
<text x="449" y="220" class="ls">Signal / Rausch-Verhältnis in dB</text>
<text x="463" y="318" text-anchor="end">0</text>
<text x="463" y="304" text-anchor="end">10</text>
<text x="463" y="290" text-anchor="end">20</text>
<text x="463" y="276" text-anchor="end">30</text>
<text x="463" y="262" text-anchor="end">40</text>
<text x="463" y="248" text-anchor="end">50</text>
<text x="463" y="234" text-anchor="end">60</text>
<text x="473.5" y="328" text-anchor="middle">0</text>
<text x="505.5" y="328" text-anchor="middle">32</text>
<text x="537.5" y="328" text-anchor="middle">64</text>
<text x="569.5" y="328" text-anchor="middle">96</text>
<text x="601.5" y="328" text-anchor="middle">128</text>
<text x="633.5" y="328" text-anchor="middle">160</text>
<text x="665.5" y="328" text-anchor="middle">192</text>
<text x="697.5" y="328" text-anchor="middle">224</text>
<text x="729.5" y="328" text-anchor="middle">256</text>
<text x="761.5" y="328" text-anchor="middle">288</text>
<text x="793.5" y="328" text-anchor="middle">320</text>
<text x="825.5" y="328" text-anchor="middle">352</text>
<text x="857.5" y="328" text-anchor="middle">384</text>
<text x="889.5" y="328" text-anchor="middle">416</text>
<text x="921.5" y="328" text-anchor="middle">448</text>
<text x="953.5" y="328" text-anchor="middle">480</text>
<text x="985.5" y="328" text-anchor="middle">512</text>
<text x="727" y="341" text-anchor="middle" class="ls">Träger</text>
<text x="449" y="355">Bits</text>
<text x="463" y="453" text-anchor="end">0</text>
<text x="463" y="441" text-anchor="end">2</text>
<text x="463" y="429" text-anchor="end">4</text>
<text x="463" y="417" text-anchor="end">6</text>
<text x="463" y="405" text-anchor="end">8</text>
<text x="463" y="393" text-anchor="end">10</text>
<text x="463" y="381" text-anchor="end">12</text>
<text x="463" y="369" text-anchor="end">14</text>
<text x="473.5" y="463" text-anchor="middle">0</text>
<text x="505.5" y="463" text-anchor="middle">32</text>
<text x="537.5" y="463" text-anchor="middle">64</text>
<text x="569.5" y="463" text-anchor="middle">96</text>
<text x="601.5" y="463" text-anchor="middle">128</text>
<text x="633.5" y="463" text-anchor="middle">160</text>
<text x="665.5" y="463" text-anchor="middle">192</text>
<text x="697.5" y="463" text-anchor="middle">224</text>
<text x="729.5" y="463" text-anchor="middle">256</text>
<text x="761.5" y="463" text-anchor="middle">288</text>
<text x="793.5" y="463" text-anchor="middle">320</text>
<text x="825.5" y="463" text-anchor="middle">352</text>
<text x="857.5" y="463" text-anchor="middle">384</text>
<text x="889.5" y="463" text-anchor="middle">416</text>
<text x="921.5" y="463" text-anchor="middle">448</text>
<text x="953.5" y="463" text-anchor="middle">480</text>
<text x="985.5" y="463" text-anchor="middle">512</text>
<text x="473.5" y="475" text-anchor="middle">0.0</text>
<text x="537.5" y="475" text-anchor="middle">276.0</text>
<text x="601.5" y="475" text-anchor="middle">552.0</text>
<text x="665.5" y="475" text-anchor="middle">828.0</text>
<text x="726.5" y="475" text-anchor="middle">1104.0</text>
<text x="790.5" y="475" text-anchor="middle">1380.0</text>
<text x="854.5" y="475" text-anchor="middle">1656.0</text>
<text x="918.5" y="475" text-anchor="middle">1932.0</text>
<text x="985.5" y="475" text-anchor="middle">2208.0</text>
<text x="668" y="488" class="ls">Träger / Frequenz in kHz</text>
<rect x="549.5" y="501.5" width="7" height="7" fill="#00ff00" stroke="#000" stroke-width="1" shape-rendering="crispEdges"/>
<text x="569" y="509" class="ls">Senderichtung</text>
<text x="691.500" y="509" class="ls">(Upstream)</text>
<rect x="549.5" y="515.5" width="7" height="7" fill="#0000ff" stroke="#000" stroke-width="1" shape-rendering="crispEdges"/>
<text x="569" y="523" class="ls">Empfangsrichtung</text>
<text x="691.500" y="523" class="ls">(Downstream)</text>
<rect x="549.5" y="529.5" width="7" height="7" fill="#ff0000" stroke="#000" stroke-width="1" shape-rendering="crispEdges"/>
<text x="569" y="537" class="ls">Pilottöne</text>
<rect x="783.5" y="501.5" width="7" height="7" fill="#ffffff" stroke="#000" stroke-width="1" shape-rendering="crispEdges"/>
<text x="803" y="509" class="ls">Kompensierter Leitungsstörer</text>
<rect x="783.5" y="515.5" width="7" height="7" fill="#ddf0fb" stroke="#000" stroke-width="1" shape-rendering="crispEdges"/>
<text x="803" y="523" class="ls">L2 Power Mode aktiv</text>
</svg>
<div id="btn">Aktualisieren</div>
<svg class="ico" style="left:1060px;top:600px" width="40" height="8" viewBox="1060 600 40 8"><polygon points="1078.5,604 1084,604 1081,608 1075,608" fill="#0a78dc"/><rect x="1065.200" y="607" width="4.600" height="1" fill="#9fd0f6"/><rect x="1082" y="607" width="1.200" height="1" fill="#333"/><rect x="1090" y="607" width="1.200" height="1" fill="#222"/></svg>
<div id="sb"><div class="arw" style="top:7px;border-width:0 4px 4px 4px;border-color:transparent transparent #333 transparent"></div><div id="sbt"><div class="grip" style="top:265px"></div><div class="grip" style="top:268px"></div><div class="grip" style="top:271px"></div></div><div class="arw" style="top:598px;border-width:4px 4px 0 4px;border-color:#333 transparent transparent transparent"></div></div>
</body></html>
